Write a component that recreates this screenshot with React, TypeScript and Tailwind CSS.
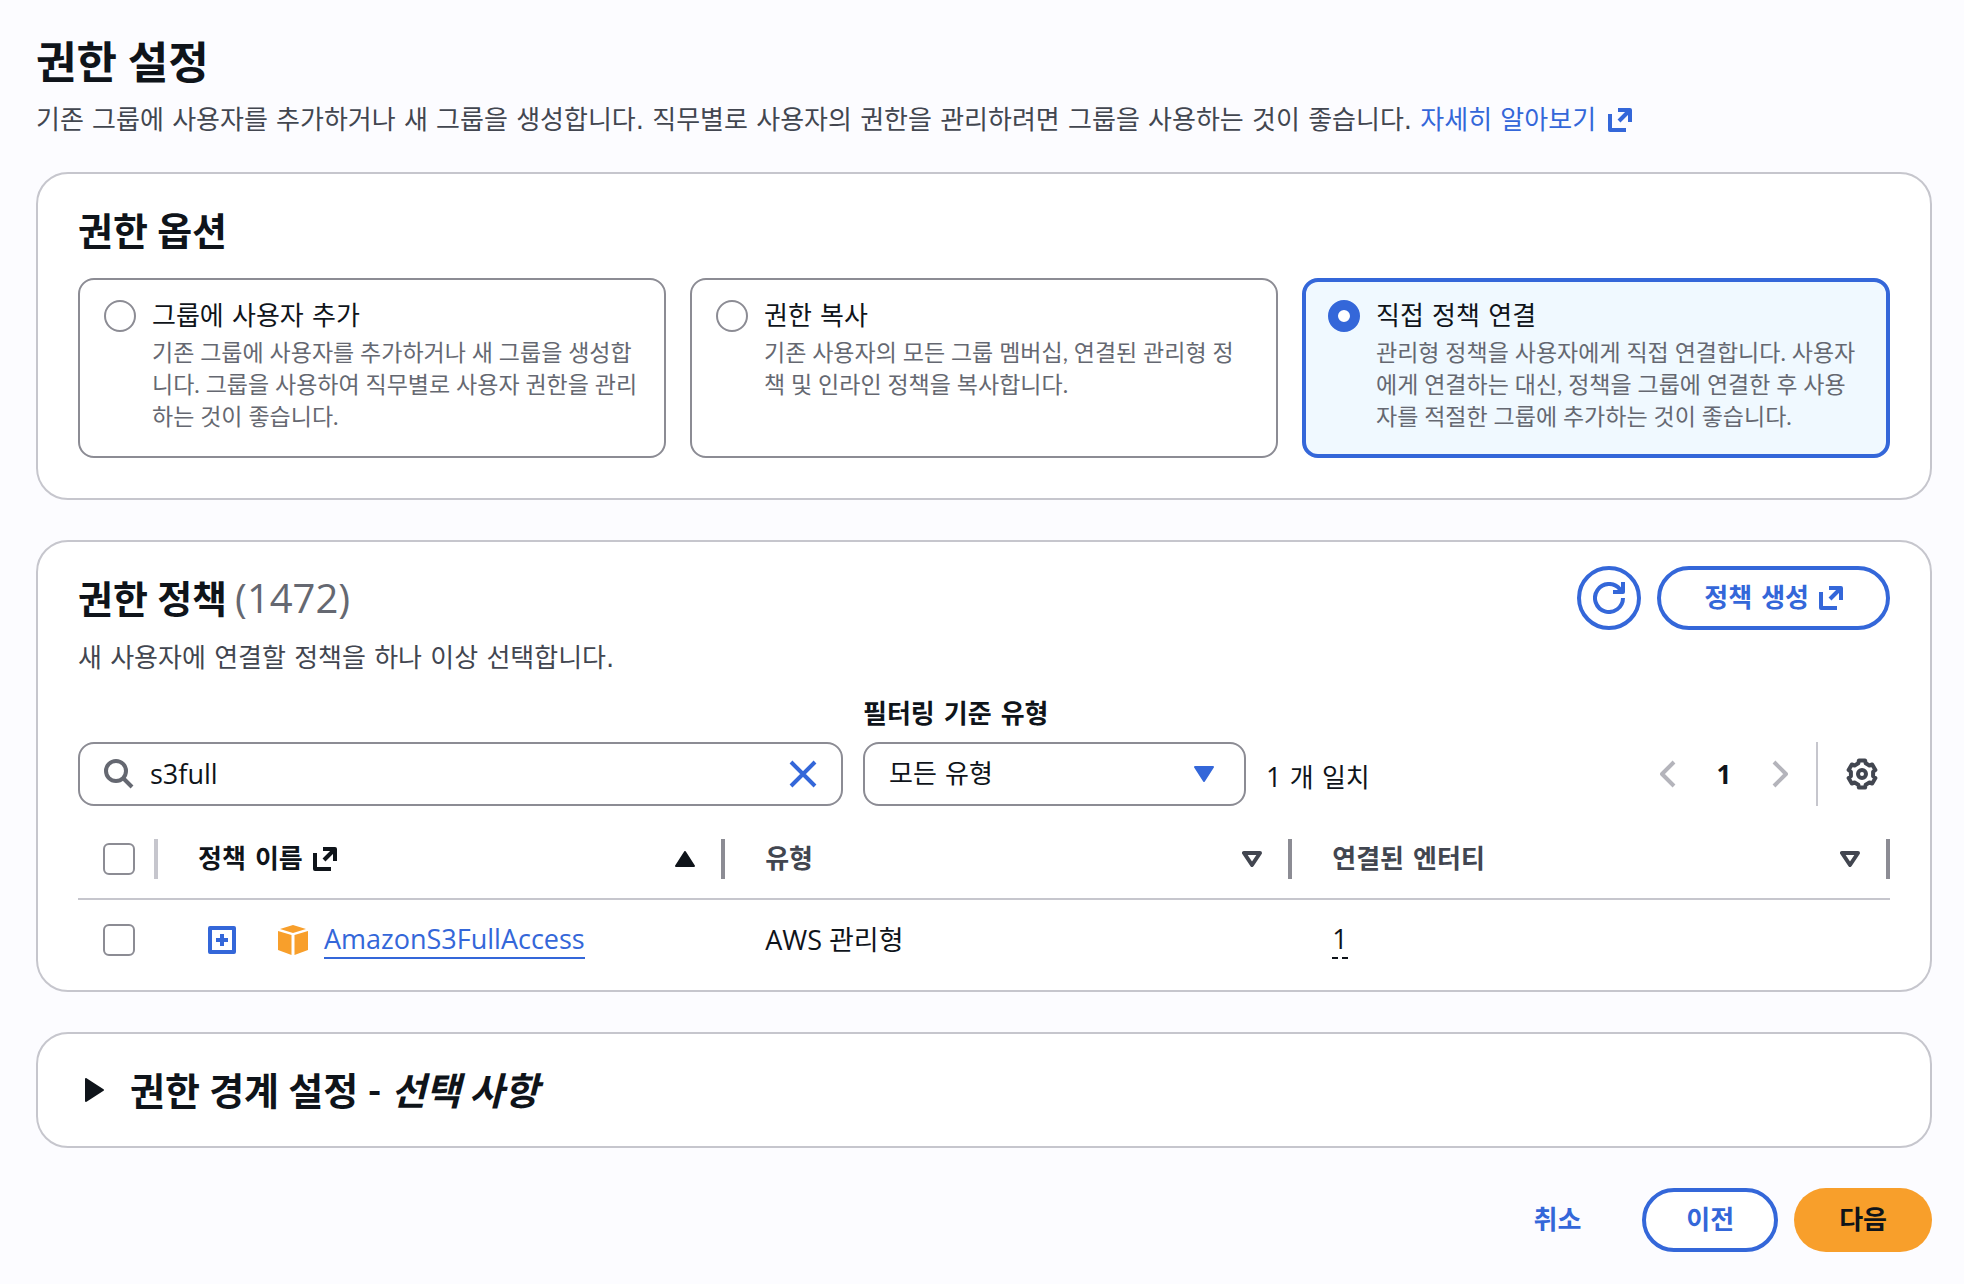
import { useState } from "react";

interface IconProps {
  className?: string;
}

interface PermissionOption {
  id: string;
  title: string;
  description: string;
}

const OPTIONS: PermissionOption[] = [
  {
    id: "group",
    title: "그룹에 사용자 추가",
    description:
      "기존 그룹에 사용자를 추가하거나 새 그룹을 생성합니다. 그룹을 사용하여 직무별로 사용자 권한을 관리하는 것이 좋습니다.",
  },
  {
    id: "copy",
    title: "권한 복사",
    description:
      "기존 사용자의 모든 그룹 멤버십, 연결된 관리형 정책 및 인라인 정책을 복사합니다.",
  },
  {
    id: "direct",
    title: "직접 정책 연결",
    description:
      "관리형 정책을 사용자에게 직접 연결합니다. 사용자에게 연결하는 대신, 정책을 그룹에 연결한 후 사용자를 적절한 그룹에 추가하는 것이 좋습니다.",
  },
];

const POLICIES = [{ name: "AmazonS3FullAccess", type: "AWS 관리형", entities: 1 }];

function ExternalIcon({ className = "" }: IconProps) {
  return (
    <svg viewBox="0 0 24 24" className={`size-6 shrink-0 ${className}`} fill="none" stroke="currentColor" strokeWidth="4" aria-hidden="true">
      <path d="M2 6v16h16" strokeLinejoin="round" />
      <path d="M10 2h12v12" strokeLinejoin="round" />
      <path d="M22 2 11 13" />
    </svg>
  );
}

function RefreshIcon() {
  return (
    <svg viewBox="0 0 32 32" className="size-8" fill="none" stroke="currentColor" strokeWidth="4" aria-hidden="true">
      <path d="M30 16a14 14 0 1 1-3-8.700l2.500 2.700" strokeLinejoin="round" />
      <path d="M30 0v10H20" strokeLinejoin="round" />
    </svg>
  );
}

function SearchIcon() {
  return (
    <svg viewBox="0 0 30 30" className="size-[30px] shrink-0 text-[#656871]" fill="none" stroke="currentColor" strokeWidth="4" aria-hidden="true">
      <circle cx="12" cy="12" r="10" />
      <path d="m19 19 9 9" />
    </svg>
  );
}

function GearIcon() {
  return (
    <svg viewBox="0 0 32 32" className="size-8" fill="none" stroke="currentColor" strokeWidth="4" strokeLinejoin="round" aria-hidden="true">
      <path d="M12.900 2.400h6.200l.6 2.900 3.700 2.200 2.800-1 3.200 5.400-2.300 1.900v4.400l2.300 1.900-3.200 5.400-2.800-1-3.700 2.200-.6 2.900h-6.200l-.6-2.900-3.700-2.200-2.800 1-3.200-5.400 2.300-1.900v-4.400l-2.300-1.900 3.200-5.400 2.800 1 3.700-2.200z" />
      <circle cx="16" cy="16" r="4" />
    </svg>
  );
}

function Chevron({ className = "" }: IconProps) {
  return (
    <svg viewBox="0 0 16 28" className={`h-7 w-4 ${className}`} fill="none" stroke="currentColor" strokeWidth="4" strokeLinejoin="round" aria-hidden="true">
      <path d="M14 2 2 14l12 12" />
    </svg>
  );
}

function Caret({ className = "", hollow = false }: IconProps & { hollow?: boolean }) {
  return (
    <svg viewBox="0 0 20 16" className={`h-4 w-5 shrink-0 ${className}`} fill={hollow ? "none" : "currentColor"} stroke="currentColor" strokeWidth={hollow ? 4 : 2} strokeLinejoin="round" aria-hidden="true">
      <path d={hollow ? "M2 2h16l-8 12z" : "M1 1h18l-9 14z"} />
    </svg>
  );
}

function CubeIcon() {
  return (
    <svg viewBox="0 0 30 30" className="size-[30px] shrink-0" fill="#f89f2b" aria-hidden="true">
      <path d="M15 0 28 4 15 8 2 4z" />
      <path d="M0 6l13.500 4v20L0 25z" />
      <path d="M30 6l-13.500 4v20L30 25z" />
    </svg>
  );
}

function OptionCard({ option, checked, onSelect }: { option: PermissionOption; checked: boolean; onSelect: () => void }) {
  return (
    <label
      htmlFor={option.id}
      className={`flex gap-4 rounded-2xl ${
        checked
          ? "border-4 border-[#3467d9] bg-[#f0f9ff] px-[22px] pt-[14px] pb-[22px]"
          : "border-2 border-[#8c8c94] bg-white px-6 pt-4 pb-6"
      }`}
    >
      <input
        id={option.id}
        type="radio"
        name="permission-option"
        checked={checked}
        onChange={onSelect}
        className="mt-1 size-8 shrink-0 appearance-none rounded-full border-2 border-[#8c8c94] bg-white checked:border-10 checked:border-[#3467d9]"
      />
      <span>
        <span className="block text-[#0f141a]">{option.title}</span>
        <span className="block font-[Lato,'Noto_Sans_CJK_KR',sans-serif] text-[23px] leading-8 text-[#656871]">{option.description}</span>
      </span>
    </label>
  );
}

function HeaderCell({ label, active = false }: { label: string; active?: boolean }) {
  return (
    <th scope="col" className="h-20 p-0 text-left font-bold">
      <div className="flex items-center justify-between border-r-4 border-[#8c8c94] pr-[26px] pl-10">
        <span className={`flex h-10 items-center gap-2.5 ${active ? "text-[#0f141a]" : "text-[#424650]"}`}>
          {label}
          {active && <ExternalIcon />}
        </span>
        {active ? <Caret className="rotate-180 text-[#0f141a]" /> : <Caret hollow className="text-[#424650]" />}
      </div>
    </th>
  );
}

const checkboxStyle = "block size-8 appearance-none rounded-md border-2 border-[#8c8c94] bg-white";
const panelStyle = "rounded-[32px] border-2 border-[#c6c6cd] bg-white";
const panelTitle = "font-[Lato,'Noto_Sans_CJK_KR',sans-serif] text-[38px] font-bold";
const outlineButton = "flex h-16 items-center justify-center rounded-full border-4 border-[#3467d9] bg-white font-bold text-[#3467d9]";
const latinText = "font-['Open_Sans','Noto_Sans_CJK_KR',sans-serif] text-[27px] font-medium";

function App() {
  const [selected, setSelected] = useState("direct");
  const [query, setQuery] = useState("s3full");

  return (
    <main className="min-h-screen bg-[#fcfcff] pt-8 pr-8 pb-8 pl-9 font-['DejaVu_Sans','Noto_Sans_CJK_KR',sans-serif] text-[26px] leading-10 text-[#0f141a]">
      <header className="mb-8">
        <h1 className="mb-2 font-[Lato,'Noto_Sans_CJK_KR',sans-serif] text-[44px] leading-[60px] font-bold">권한 설정</h1>
        <p className="text-[#424650]">
          기존 그룹에 사용자를 추가하거나 새 그룹을 생성합니다. 직무별로 사용자의 권한을 관리하려면 그룹을 사용하는 것이 좋습니다.{" "}
          <a href="#learn-more" className="inline-flex items-center gap-3 text-[#3467d9]">
            자세히 알아보기
            <ExternalIcon />
          </a>
        </p>
      </header>

      <section className={`${panelStyle} mb-10 px-10 pt-8 pb-10`}>
        <h2 className={`${panelTitle} mb-6 leading-12`}>권한 옵션</h2>
        <div className="grid grid-cols-3 gap-6">
          {OPTIONS.map((option) => (
            <OptionCard key={option.id} option={option} checked={selected === option.id} onSelect={() => setSelected(option.id)} />
          ))}
        </div>
      </section>

      <section className={`${panelStyle} mb-10 px-10 pt-6 pb-[11px]`}>
        <div className="flex items-start justify-between">
          <div>
            <h2 className={`${panelTitle} flex gap-2 leading-16`}>
              권한 정책 <span className="font-['Open_Sans'] text-[40px] font-medium text-[#656871]">(1472)</span>
            </h2>
            <p className="mt-2 text-[#424650]">새 사용자에 연결할 정책을 하나 이상 선택합니다.</p>
          </div>
          <div className="flex gap-4">
            <button type="button" aria-label="새로 고침" className={`${outlineButton} w-16`}>
              <RefreshIcon />
            </button>
            <button type="button" className={`${outlineButton} gap-2.5 px-[43px]`}>
              정책 생성
              <ExternalIcon />
            </button>
          </div>
        </div>

        <div className="mt-4 flex items-end">
          <div className="mr-5 flex h-16 w-[765px] items-center gap-4 rounded-2xl border-2 border-[#8c8c94] px-6">
            <SearchIcon />
            <input
              type="text"
              aria-label="정책 검색"
              value={query}
              onChange={(e) => setQuery(e.target.value)}
              className={`${latinText} min-w-0 flex-1 outline-none`}
            />
            <button type="button" aria-label="지우기" className="text-[#3467d9]" onClick={() => setQuery("")}>
              <svg viewBox="0 0 28 28" className="size-7" stroke="currentColor" strokeWidth="4" aria-hidden="true">
                <path d="m2 2 24 24M26 2 2 26" />
              </svg>
            </button>
          </div>
          <div className="mr-5 w-[383px]">
            <label htmlFor="type-filter" className="mb-2 block font-bold">
              필터링 기준 유형
            </label>
            <div className="relative">
              <select id="type-filter" className="block h-16 w-full appearance-none rounded-2xl border-2 border-[#8c8c94] bg-white px-6">
                <option>모든 유형</option>
              </select>
              <Caret className="pointer-events-none absolute top-6 right-8 text-[#3467d9]" />
            </div>
          </div>
          <p className="pb-2">
            <span className={latinText}>1</span> 개 일치
          </p>
          <div className="ml-auto flex h-16 items-center">
            <button type="button" aria-label="이전 페이지" disabled className="text-[#b4b4bb]">
              <Chevron />
            </button>
            <button type="button" aria-current="page" className="mx-8 w-8 text-center font-['Open_Sans'] font-bold">
              1
            </button>
            <button type="button" aria-label="다음 페이지" disabled className="text-[#b4b4bb]">
              <Chevron className="rotate-180" />
            </button>
            <div className="mx-7 h-16 border-l-2 border-[#c6c6cd]" />
            <button type="button" aria-label="기본 설정" className="mr-3 text-[#424650]">
              <GearIcon />
            </button>
          </div>
        </div>

        <table className="mt-[13px] w-full table-fixed border-collapse">
          <colgroup>
            <col className="w-20" />
            <col className="w-[31.3%]" />
            <col className="w-[31.3%]" />
            <col />
          </colgroup>
          <thead className="border-b-2 border-[#c6c6cd]">
            <tr>
              <th scope="col" className="p-0">
                <div className="flex h-10 items-center border-r-4 border-[#c6c6cd] pl-[25px]">
                  <input type="checkbox" aria-label="모두 선택" className={checkboxStyle} />
                </div>
              </th>
              <HeaderCell label="정책 이름" active />
              <HeaderCell label="유형" />
              <HeaderCell label="연결된 엔터티" />
            </tr>
          </thead>
          <tbody>
            {POLICIES.map((policy) => (
              <tr key={policy.name}>
                <td className="h-20 p-0 pl-[25px]">
                  <input type="checkbox" aria-label={policy.name} className={checkboxStyle} />
                </td>
                <td className="p-0 pl-[50px]">
                  <div className="flex items-center">
                    <button type="button" aria-label="펼치기" className="mr-[42px] text-[#3467d9]">
                      <svg viewBox="0 0 28 28" className="size-7" fill="none" stroke="currentColor" strokeWidth="4" strokeLinejoin="round" aria-hidden="true">
                        <path d="M2 2h24v24H2zM14 8v12M8 14h12" />
                      </svg>
                    </button>
                    <CubeIcon />
                    <a href="#policy" className={`${latinText} ml-4 border-b-2 border-[#3467d9] leading-9 text-[#3467d9]`}>
                      {policy.name}
                    </a>
                  </div>
                </td>
                <td className="p-0 pl-10 font-['Open_Sans','Noto_Sans_CJK_KR',sans-serif] text-[27px]">{policy.type}</td>
                <td className="p-0 pl-10">
                  <button type="button" className={`${latinText} border-b-2 border-dashed border-[#0f141a] leading-9`}>
                    {policy.entities}
                  </button>
                </td>
              </tr>
            ))}
          </tbody>
        </table>
      </section>

      <section className={panelStyle}>
        <button type="button" aria-expanded="false" className="flex w-full items-center gap-[26px] px-10 py-8 text-left">
          <svg viewBox="0 0 20 24" className="ml-1.5 h-6 w-5" fill="currentColor" stroke="currentColor" strokeWidth="2" strokeLinejoin="round" aria-hidden="true">
            <path d="M2 1v22L19 12z" />
          </svg>
          <h2 className={`${panelTitle} leading-12`}>
            권한 경계 설정 - <i>선택 사항</i>
          </h2>
        </button>
      </section>

      <footer className="mt-10 flex justify-end gap-4">
        <button type="button" className="h-16 px-[45px] font-bold text-[#3467d9]">
          취소
        </button>
        <button type="button" className={`${outlineButton} px-10`}>
          이전
        </button>
        <button type="button" className="h-16 rounded-full bg-[#f89f2b] px-[45px] font-bold">
          다음
        </button>
      </footer>
    </main>
  );
}

export default App;
